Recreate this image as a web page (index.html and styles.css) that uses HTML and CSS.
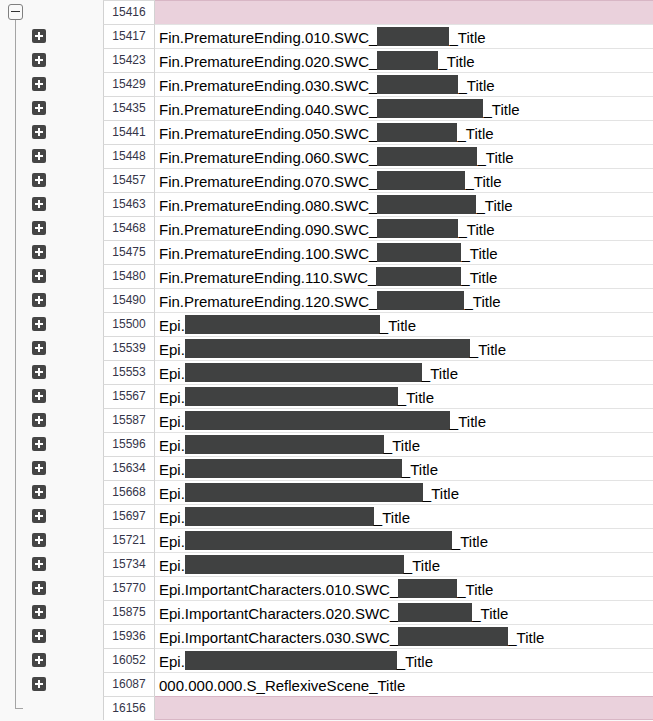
FILE: index.html
```html
<!DOCTYPE html>
<html lang="en">
<head>
  <meta charset="UTF-8">
  <meta name="viewport" content="width=device-width, initial-scale=1.0">
  <title>Title keys</title>
  <link rel="stylesheet" href="styles.css">
</head>
<body>

<div class="sheet">
  <div class="row group-start">
    <div class="gutter"><span class="collapse"></span></div>
    <div class="num">15416</div>
    <div class="cell"></div>
  </div>

  <div class="row"><div class="gutter"><span class="expand"></span></div><div class="num">15417</div><div class="cell">Fin.PrematureEnding.010.SWC_<span class="hidden" style="width:72px"></span>_Title</div></div>
  <div class="row"><div class="gutter"><span class="expand"></span></div><div class="num">15423</div><div class="cell">Fin.PrematureEnding.020.SWC_<span class="hidden" style="width:61px"></span>_Title</div></div>
  <div class="row"><div class="gutter"><span class="expand"></span></div><div class="num">15429</div><div class="cell">Fin.PrematureEnding.030.SWC_<span class="hidden" style="width:81px"></span>_Title</div></div>
  <div class="row"><div class="gutter"><span class="expand"></span></div><div class="num">15435</div><div class="cell">Fin.PrematureEnding.040.SWC_<span class="hidden" style="width:106px"></span>_Title</div></div>
  <div class="row"><div class="gutter"><span class="expand"></span></div><div class="num">15441</div><div class="cell">Fin.PrematureEnding.050.SWC_<span class="hidden" style="width:80px"></span>_Title</div></div>
  <div class="row"><div class="gutter"><span class="expand"></span></div><div class="num">15448</div><div class="cell">Fin.PrematureEnding.060.SWC_<span class="hidden" style="width:100px"></span>_Title</div></div>
  <div class="row"><div class="gutter"><span class="expand"></span></div><div class="num">15457</div><div class="cell">Fin.PrematureEnding.070.SWC_<span class="hidden" style="width:88px"></span>_Title</div></div>
  <div class="row"><div class="gutter"><span class="expand"></span></div><div class="num">15463</div><div class="cell">Fin.PrematureEnding.080.SWC_<span class="hidden" style="width:99px"></span>_Title</div></div>
  <div class="row"><div class="gutter"><span class="expand"></span></div><div class="num">15468</div><div class="cell">Fin.PrematureEnding.090.SWC_<span class="hidden" style="width:81px"></span>_Title</div></div>
  <div class="row"><div class="gutter"><span class="expand"></span></div><div class="num">15475</div><div class="cell">Fin.PrematureEnding.100.SWC_<span class="hidden" style="width:84px"></span>_Title</div></div>
  <div class="row"><div class="gutter"><span class="expand"></span></div><div class="num">15480</div><div class="cell">Fin.PrematureEnding.110.SWC_<span class="hidden" style="width:85px"></span>_Title</div></div>
  <div class="row"><div class="gutter"><span class="expand"></span></div><div class="num">15490</div><div class="cell">Fin.PrematureEnding.120.SWC_<span class="hidden" style="width:87px"></span>_Title</div></div>

  <div class="row"><div class="gutter"><span class="expand"></span></div><div class="num">15500</div><div class="cell">Epi.<span class="hidden" style="width:195px"></span>_Title</div></div>
  <div class="row"><div class="gutter"><span class="expand"></span></div><div class="num">15539</div><div class="cell">Epi.<span class="hidden" style="width:285px"></span>_Title</div></div>
  <div class="row"><div class="gutter"><span class="expand"></span></div><div class="num">15553</div><div class="cell">Epi.<span class="hidden" style="width:237px"></span>_Title</div></div>
  <div class="row"><div class="gutter"><span class="expand"></span></div><div class="num">15567</div><div class="cell">Epi.<span class="hidden" style="width:213px"></span>_Title</div></div>
  <div class="row"><div class="gutter"><span class="expand"></span></div><div class="num">15587</div><div class="cell">Epi.<span class="hidden" style="width:265px"></span>_Title</div></div>
  <div class="row"><div class="gutter"><span class="expand"></span></div><div class="num">15596</div><div class="cell">Epi.<span class="hidden" style="width:199px"></span>_Title</div></div>
  <div class="row"><div class="gutter"><span class="expand"></span></div><div class="num">15634</div><div class="cell">Epi.<span class="hidden" style="width:217px"></span>_Title</div></div>
  <div class="row"><div class="gutter"><span class="expand"></span></div><div class="num">15668</div><div class="cell">Epi.<span class="hidden" style="width:238px"></span>_Title</div></div>
  <div class="row"><div class="gutter"><span class="expand"></span></div><div class="num">15697</div><div class="cell">Epi.<span class="hidden" style="width:189px"></span>_Title</div></div>
  <div class="row"><div class="gutter"><span class="expand"></span></div><div class="num">15721</div><div class="cell">Epi.<span class="hidden" style="width:267px"></span>_Title</div></div>
  <div class="row"><div class="gutter"><span class="expand"></span></div><div class="num">15734</div><div class="cell">Epi.<span class="hidden" style="width:219px"></span>_Title</div></div>

  <div class="row"><div class="gutter"><span class="expand"></span></div><div class="num">15770</div><div class="cell">Epi.ImportantCharacters.010.SWC_<span class="hidden" style="width:59px"></span>_Title</div></div>
  <div class="row"><div class="gutter"><span class="expand"></span></div><div class="num">15875</div><div class="cell">Epi.ImportantCharacters.020.SWC_<span class="hidden" style="width:74px"></span>_Title</div></div>
  <div class="row"><div class="gutter"><span class="expand"></span></div><div class="num">15936</div><div class="cell">Epi.ImportantCharacters.030.SWC_<span class="hidden" style="width:110px"></span>_Title</div></div>
  <div class="row"><div class="gutter"><span class="expand"></span></div><div class="num">16052</div><div class="cell">Epi.<span class="hidden" style="width:212px"></span>_Title</div></div>
  <div class="row"><div class="gutter"><span class="expand"></span></div><div class="num">16087</div><div class="cell">000.000.000.S_ReflexiveScene_Title</div></div>

  <div class="row group-end">
    <div class="gutter"></div>
    <div class="num">16156</div>
    <div class="cell"></div>
  </div>
</div>

</body>
</html>
```

FILE: styles.css
```css
body { margin: 0; background: #f9f9f9; font-family: "Liberation Sans", Arial, sans-serif; }

.sheet { width: 653px; }

.row { display: grid; grid-template-columns: 103px 52px 1fr; height: 24px; }

/* outline gutter with the group line */
.gutter {
  display: flex; align-items: center; padding-left: 32px;
  background: linear-gradient(#a5a5a5, #a5a5a5) 15px 0 / 1px 100% no-repeat, #f9f9f9;
}
.group-start .gutter {
  padding-left: 8px;
  background: linear-gradient(#a5a5a5, #a5a5a5) 15px 12px / 1px 12px no-repeat, #f9f9f9;
}
.group-end .gutter {
  background:
    linear-gradient(#a5a5a5, #a5a5a5) 15px 0 / 1px 13px no-repeat,
    linear-gradient(#a5a5a5, #a5a5a5) 15px 12px / 8px 1px no-repeat,
    #f9f9f9;
}

.expand {
  width: 14px; height: 14px; border-radius: 2px;
  background:
    linear-gradient(#fff, #fff) center / 8px 2px no-repeat,
    linear-gradient(#fff, #fff) center / 2px 8px no-repeat,
    #454545;
}
.collapse {
  box-sizing: border-box; width: 15px; height: 16px; margin-top: -1px;
  border: 1px solid #808080; border-radius: 3px;
  background: linear-gradient(#333, #333) center / 9px 1px no-repeat, #fafafa;
}

.num {
  border-left: 1px solid #d2d2d2; border-right: 1px solid #d2d2d2; border-top: 1px solid #dadada;
  background: #fff; color: #353549; font-size: 12px; line-height: 23px; text-align: center;
}
.cell {
  border-top: 1px solid #e3e3e3; background: #fff; color: #000;
  font-size: 15px; line-height: 23px; padding: 1px 0 0 4px; box-sizing: border-box;
  white-space: nowrap; overflow: hidden;
  display: flex; align-items: flex-start;
}
.hidden { display: inline-block; height: 19px; margin-top: 1px; background: #404141; }

.group-start .cell, .group-end .cell { background: #ead1dc; border-top-color: #d8b6c5; }
.group-end .cell { border-bottom: 1px solid #d8b6c5; }
```
